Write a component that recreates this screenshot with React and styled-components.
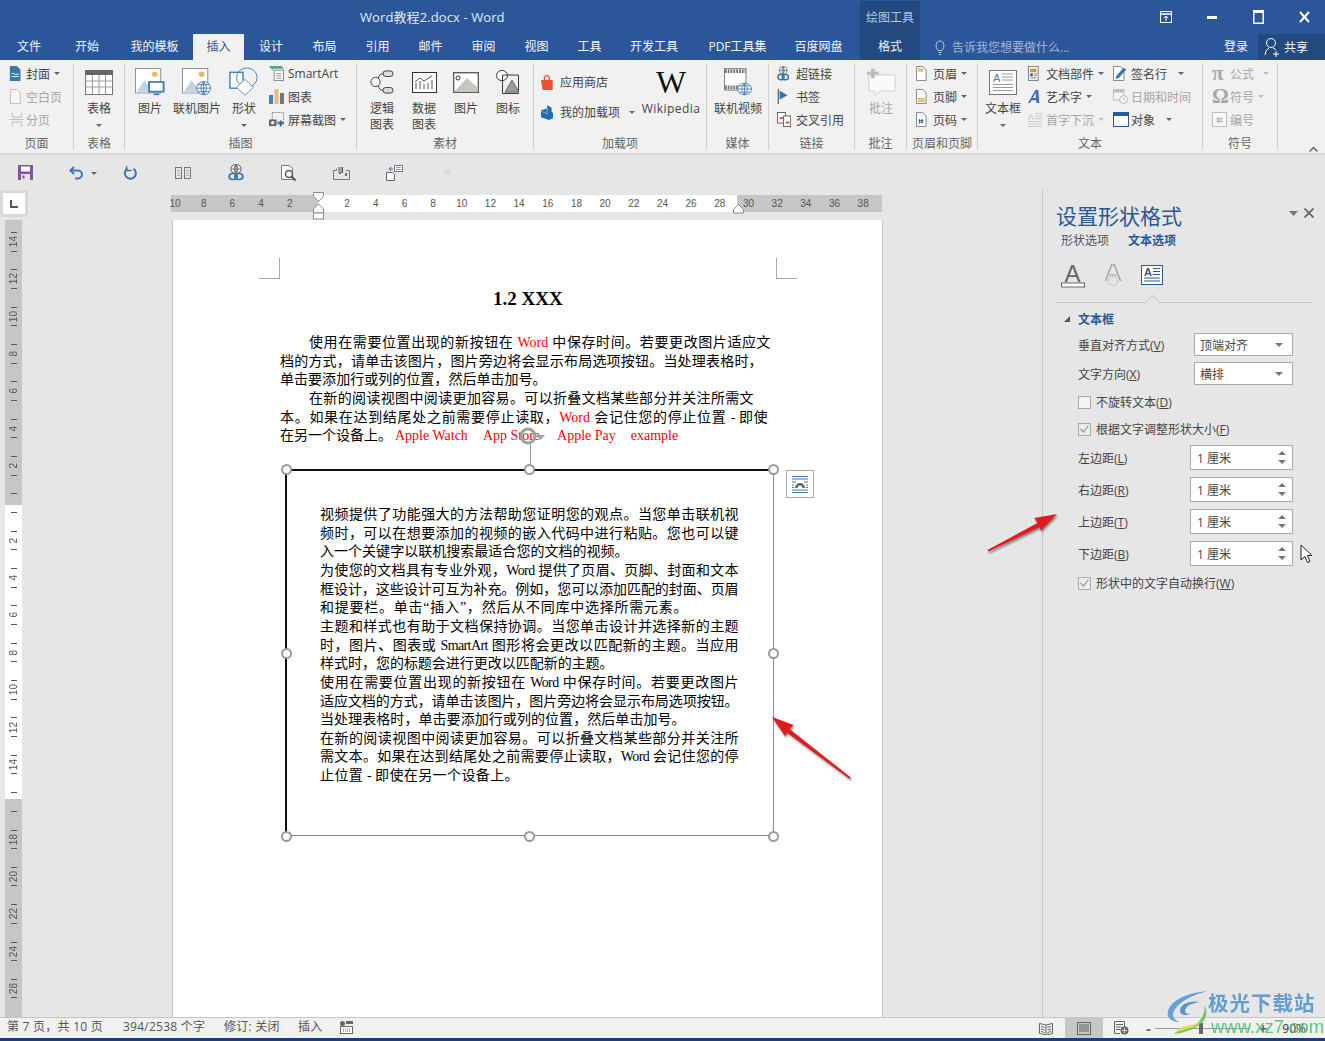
import React from "react";
import styled, { createGlobalStyle } from "styled-components";

const UI = `"Open Sans", "Noto Sans CJK SC", sans-serif`;
const BLUE = "#2b579a";

const Global = createGlobalStyle`
  html, body { margin: 0; padding: 0; background: #e6e6e6; }
  * { box-sizing: border-box; }
`;

const Window = styled.div`
  position: relative;
  width: 1325px;
  height: 1041px;
  overflow: hidden;
  display: flex;
  flex-direction: column;
  background: #e6e6e6;
  font-family: ${UI};
  font-size: 12px;
  color: #444;
`;

/* title bar + tabs */
const TitleBar = styled.div`
  height: 34px;
  flex: none;
  display: flex;
  background: ${BLUE};
  color: #e4ebf5;
`;
const TitleText = styled.div`
  width: 500px;
  margin-left: 360px;
  line-height: 34px;
  font-size: 13px;
  letter-spacing: 0.1px;
`;
const ContextHead = styled.div`
  width: 60px;
  margin-top: 1px;
  background: #234a80;
  color: #b5c6de;
  text-align: center;
  line-height: 33px;
`;
const WinBtns = styled.div`
  display: flex;
  margin-left: auto;
  margin-right: -2px;
`;
const WinBtn = styled.div`
  width: 46px;
  display: flex;
  align-items: center;
  justify-content: center;
`;
const TabBar = styled.div`
  height: 26px;
  flex: none;
  display: flex;
  background: ${BLUE};
  color: #f2f5fa;
`;
const Tab = styled.div`
  width: ${(p) => p.$w}px;
  flex: none;
  text-align: center;
  line-height: 26px;
  white-space: nowrap;
  background: ${(p) => (p.$active ? "#f1f1f1" : p.$ctx ? "#234a80" : "transparent")};
  color: ${(p) => (p.$active ? BLUE : "inherit")};
  margin-left: ${(p) => p.$ml || 0}px;
`;
const TellMe = styled.div`
  margin-left: 15px;
  width: 280px;
  flex: none;
  display: flex;
  align-items: center;
  gap: 7px;
  color: #a4b8d4;
`;
const Login = styled.div`
  width: 38px;
  flex: none;
  margin-left: 2px;
  line-height: 26px;
  text-align: center;
`;
const Share = styled.div`
  width: 67px;
  flex: none;
  margin-left: 3px;
  background: #234a80;
  display: flex;
  align-items: center;
  gap: 3px;
  padding-left: 6px;
`;

/* ribbon */
const Ribbon = styled.div`
  height: 95px;
  flex: none;
  display: flex;
  padding-top: 3px;
  background: #f1f1f1;
  border-bottom: 2px solid #d6d6d6;
`;
const Group = styled.div`
  width: ${(p) => p.$w}px;
  height: 87px;
  flex: none;
  display: flex;
  flex-direction: column;
  border-right: 1px solid #cfcfcf;
`;
const GroupBody = styled.div`
  flex: 1;
  display: flex;
  padding-left: ${(p) => p.$pl || 0}px;
`;
const GroupLabel = styled.div`
  height: 13px;
  line-height: 13px;
  text-align: center;
  color: #666;
  white-space: nowrap;
`;
const LargeBtn = styled.div`
  width: ${(p) => p.$w}px;
  flex: none;
  display: flex;
  flex-direction: column;
  align-items: center;
  color: ${(p) => (p.$off ? "#a6a6a6" : "inherit")};
`;
const LargeIcon = styled.div`
  height: 38px;
  display: flex;
  align-items: center;
  justify-content: center;
  font-family: "Liberation Serif", serif;
  font-size: 32px;
  color: #111;
`;
const LargeText = styled.div`
  line-height: 16px;
  text-align: center;
  white-space: nowrap;
`;
const WikiText = styled.span`
  letter-spacing: 0.45px;
`;
const Caret = styled.span`
  display: inline-block;
  width: 0;
  height: 0;
  border-left: 3px solid transparent;
  border-right: 3px solid transparent;
  border-top: 3px solid ${(p) => (p.$off ? "#bbb" : "#666")};
  margin-left: ${(p) => p.$ml ?? 4}px;
  margin-top: ${(p) => p.$mt || 0}px;
  vertical-align: middle;
`;
const SmallCol = styled.div`
  width: ${(p) => (p.$w ? `${p.$w}px` : "auto")};
  flex: none;
  display: flex;
  flex-direction: column;
  margin-top: -1px;
`;
const SmallRow = styled.div`
  height: ${(p) => p.$h || 23}px;
  display: flex;
  align-items: center;
  white-space: nowrap;
  color: ${(p) => (p.$off ? "#a6a6a6" : "inherit")};
`;
const Slot = styled.span`
  width: ${(p) => p.$w || 17}px;
  flex: none;
  display: flex;
  align-items: center;
  svg {
    height: 15px;
    width: auto;
  }
`;
const Glyph = styled.span`
  font-family: "Liberation Serif", serif;
  font-size: 21px;
  font-weight: 700;
  line-height: 1;
  color: #a6a6a6;
`;
const Collapse = styled.div`
  margin-left: auto;
  margin-right: 7px;
  align-self: flex-end;
  margin-bottom: 1px;
  line-height: 0;
`;

/* quick access */
const Qat = styled.div`
  height: 35px;
  flex: none;
  display: flex;
  align-items: center;
  background: #e6e6e6;
`;
const QBtn = styled.div`
  width: ${(p) => p.$w || 53}px;
  display: flex;
  align-items: center;
  justify-content: center;
  position: relative;
`;
const QCaret = styled(Caret)`
  position: absolute;
  left: 41px;
  top: 6px;
`;

/* workspace */
const Workspace = styled.div`
  flex: 1;
  min-height: 0;
  display: flex;
`;
const Gutter = styled.div`
  width: 171px;
  flex: none;
  display: flex;
  flex-direction: column;
`;
const Corner = styled.div`
  width: 28px;
  height: 27px;
  flex: none;
  margin-bottom: 3px;
  background: #d9d9d9;
  padding: 3px;
`;
const CornerFace = styled.div`
  width: 22px;
  height: 21px;
  background: #fff;
  display: flex;
  align-items: center;
  justify-content: center;
`;
const VRuler = styled.div`
  width: 17px;
  flex: 1;
  margin-left: 5px;
  padding-top: 3px;
  background: linear-gradient(#c6c6c6 285px, #fff 285px, #fff 579px, #c6c6c6 579px);
  overflow: hidden;
`;
const VCell = styled.div`
  position: relative;
  height: 37.35px;
  display: flex;
  align-items: center;
  justify-content: center;
  font-size: 10px;
  font-family: "Liberation Sans", sans-serif;
  color: #555;
  &::before,
  &::after {
    content: "";
    position: absolute;
    left: 6px;
    width: 6px;
    height: 1px;
    background: #555;
  }
  &::before { top: 9px; }
  &::after { top: 27.5px; }
`;
const VNum = styled.span`
  writing-mode: vertical-rl;
  transform: rotate(180deg);
  line-height: 1;
`;
const DocCol = styled.div`
  width: 712px;
  flex: none;
  display: flex;
  flex-direction: column;
`;
const HRuler = styled.div`
  position: relative;
  height: 17px;
  flex: none;
  margin: 5px 0 8px;
  width: 711px;
  background: linear-gradient(90deg, #c6c6c6 147px, #fff 147px, #fff 566px, #c6c6c6 566px);
`;
const HScale = styled.div`
  display: flex;
  margin-left: -10.3px;
  width: 721px;
  overflow: hidden;
`;
const HCell = styled.div`
  width: 28.68px;
  flex: none;
  text-align: center;
  font-size: 10px;
  line-height: 17px;
  font-family: "Liberation Sans", sans-serif;
  color: #555;
`;
const RulerMark = styled.svg`
  position: absolute;
  left: ${(p) => p.$x}px;
  top: ${(p) => p.$y}px;
`;
const Page = styled.div`
  flex: 1;
  margin-left: 1px;
  background: #fff;
  border-left: 1px solid #c6c6c6;
  border-right: 1px solid #c6c6c6;
  padding-top: 38px;
  color: #000;
  font-family: "Liberation Serif", "Noto Sans CJK SC", serif;
  font-size: 14px;
`;
const CropRow = styled.div`
  display: flex;
  justify-content: space-between;
  padding: 0 85px 0 86px;
`;
const Crop = styled.div`
  width: 21px;
  height: 21px;
  border-bottom: 1px solid #aaa;
  border-${(p) => p.$side}: 1px solid #aaa;
`;
const Heading = styled.div`
  margin-top: 11px;
  height: 18px;
  padding-left: 320px;
  font-size: 19px;
  font-weight: 700;
  line-height: 18px;
`;
const Para = styled.div`
  margin-top: 26px;
  padding-left: 107px;
`;
const Line = styled.div`
  height: 18.67px;
  line-height: 18.67px;
  width: ${(p) => p.$w}px;
  margin-left: ${(p) => p.$x || 0}px;
  letter-spacing: -0.6px;
  text-align: justify;
  text-align-last: justify;
`;
const FreeLine = styled.div`
  height: 18.67px;
  line-height: 18.67px;
  white-space: nowrap;
`;
const Red = styled.span`
  color: #f00;
  letter-spacing: 0;
  margin-left: ${(p) => p.$ml || 0}px;
`;
const ShapeBox = styled.div`
  position: relative;
  margin: 23px 0 0 112px;
  width: 488.5px;
  height: 367.5px;
  padding: 35px 0 0 33px;
  border-top: 2px solid #111;
  border-left: 2px solid #111;
  border-right: 1.5px solid #8e8e8e;
  border-bottom: 1.5px solid #8e8e8e;
`;
const Handle = styled.span`
  position: absolute;
  left: calc(${(p) => p.$h}% + ${(p) => (p.$h / 100) * 2 - 1}px);
  top: calc(${(p) => p.$v}% + ${(p) => (p.$v / 100) * 2 - 1}px);
  width: 11px;
  height: 11px;
  margin: -5.5px 0 0 -5.5px;
  border-radius: 50%;
  background: #fff;
  border: 2px solid #9a9a9a;
`;
const RotStem = styled.span`
  position: absolute;
  left: 243px;
  top: -28px;
  width: 1px;
  height: 27px;
  background: #9a9a9a;
`;
const RotHandle = styled.svg`
  position: absolute;
  left: 229px;
  top: -49px;
`;
const LayoutBtn = styled.div`
  position: absolute;
  left: 499px;
  top: -1px;
  width: 28px;
  height: 28px;
  background: #fff;
  border: 1px solid #aaa;
  display: flex;
  align-items: center;
  justify-content: center;
`;

/* format pane */
const Pane = styled.div`
  position: relative;
  width: 283px;
  flex: none;
  margin-left: auto;
  border-left: 1px solid #c6c6c6;
  padding-top: 12px;
`;
const PaneHead = styled.div`
  display: flex;
  justify-content: space-between;
  align-items: center;
  padding: 0 11px 0 13px;
`;
const PaneTitle = styled.div`
  font-size: 21px;
  line-height: 28px;
  color: ${BLUE};
`;
const PaneTools = styled.div`
  display: flex;
  align-items: center;
  gap: 6px;
  margin-top: -6px;
`;
const SubTabs = styled.div`
  display: flex;
  height: 16px;
  line-height: 16px;
  margin: 3px 0 0 18px;
`;
const SubTab = styled.div`
  width: ${(p) => p.$w}px;
  color: ${(p) => (p.$on ? BLUE : "#555")};
  font-weight: ${(p) => (p.$on ? 700 : 400)};
`;
const PaneIcons = styled.div`
  display: flex;
  align-items: center;
  height: 24px;
  margin: 14px 0 0 18px;
  gap: 19px;
`;
const PaneRule = styled.div`
  position: relative;
  height: 1px;
  width: 257px;
  margin: 15px 0 0 13px;
  background: #c9c9c9;
  &::after {
    content: "";
    position: absolute;
    left: 91px;
    top: -5px;
    width: 10px;
    height: 10px;
    background: #e6e6e6;
    border-left: 1px solid #c9c9c9;
    border-top: 1px solid #c9c9c9;
    transform: rotate(45deg);
  }
`;
const SectionHead = styled.div`
  display: flex;
  align-items: center;
  height: 16px;
  margin: 8px 0 0 21px;
  gap: 8px;
  color: ${BLUE};
  font-weight: 700;
`;
const FieldRow = styled.div`
  display: flex;
  align-items: center;
  justify-content: space-between;
  width: 215px;
  margin: ${(p) => p.$mt}px 0 0 35px;
  height: ${(p) => p.$h}px;
  white-space: nowrap;
`;
const Select = styled.div`
  width: 99px;
  height: 23px;
  background: #fff;
  border: 1px solid #ababab;
  padding: 0 9px 0 5px;
  display: flex;
  align-items: center;
  justify-content: space-between;
`;
const Spin = styled.div`
  width: 103px;
  height: 25px;
  background: #fff;
  border: 1px solid #ababab;
  padding: 0 6px;
  display: flex;
  align-items: center;
  justify-content: space-between;
`;
const SpinArrows = styled.div`
  display: flex;
  flex-direction: column;
  gap: 5px;
`;
const Arrow = styled.span`
  width: 0;
  height: 0;
  border-left: 4px solid transparent;
  border-right: 4px solid transparent;
  ${(p) => (p.$up ? "border-bottom" : "border-top")}: 4px solid #777;
`;
const CheckRow = styled.div`
  display: flex;
  align-items: center;
  gap: 5px;
  height: 18px;
  margin: ${(p) => p.$mt}px 0 0 35px;
  white-space: nowrap;
`;
const Check = styled.span`
  width: 13px;
  height: 13px;
  flex: none;
  border: 1px solid #ababab;
  background: ${(p) => (p.$on ? "#ececec" : "#f4f4f4")};
  display: flex;
  align-items: center;
  justify-content: center;
`;
const Under = styled.span`
  text-decoration: underline;
`;
const Cursor = styled.svg`
  position: absolute;
  left: 257px;
  top: 354px;
`;

/* status */
const Status = styled.div`
  height: 21px;
  flex: none;
  display: flex;
  align-items: center;
  padding-left: 7px;
  background: #f1f1f1;
  border-top: 1px solid #c6c6c6;
  color: #555;
`;
const StatusItem = styled.div`
  width: ${(p) => p.$w}px;
  flex: none;
  height: 20px;
  white-space: nowrap;
  line-height: 18px;
  letter-spacing: 0.25px;
`;
const MacroSlot = styled.div`
  margin-top: -2px;
  line-height: 0;
`;
const StatusRight = styled.div`
  margin-left: auto;
  display: flex;
  align-items: center;
  height: 100%;
  padding-right: 19px;
`;
const ViewBtn = styled.div`
  width: 38px;
  height: 100%;
  display: flex;
  align-items: center;
  justify-content: center;
  background: ${(p) => (p.$on ? "#c6c6c6" : "transparent")};
`;
const ZoomTrack = styled.div`
  position: relative;
  width: 95px;
  height: 1px;
  margin: 0 9px 0 4px;
  background: #999;
  &::after {
    content: "";
    position: absolute;
    left: 44px;
    top: -5px;
    width: 4px;
    height: 11px;
    background: #666;
  }
`;
const ZoomSign = styled.span`
  font-size: 15px;
  font-weight: 700;
  line-height: 1;
  color: #666;
  margin-left: ${(p) => p.$ml || 0}px;
`;
const ZoomValue = styled.span`
  margin-left: 15px;
  color: #333;
`;
const BottomEdge = styled.div`
  height: 3px;
  flex: none;
  background: #1e3f6f;
`;

/* things lying over the page */
const Annotations = styled.svg`
  position: absolute;
  left: 0;
  top: 0;
  pointer-events: none;
  filter: drop-shadow(1px 2px 1px rgba(0, 0, 0, 0.45));
`;
const Watermark = styled.div`
  position: absolute;
  left: 1166px;
  top: 989px;
  display: flex;
  opacity: 0.92;
`;
const MarkText = styled.div`
  margin-left: -2px;
  padding-top: 1px;
`;
const MarkName = styled.div`
  font-size: 20.5px;
  font-weight: 700;
  line-height: 26px;
  letter-spacing: 1px;
  color: #5a97d0;
  white-space: nowrap;
`;
const MarkUrl = styled.div`
  font-size: 18.5px;
  line-height: 22px;
  color: #52c278;
  font-family: "Liberation Sans", sans-serif;
  white-space: nowrap;
  margin-left: 3px;
`;

/* icons */
const S = ({ w, h, vw, vh, children }) => (
  <svg width={w} height={h} viewBox={`0 0 ${vw || w} ${vh || h}`} preserveAspectRatio="none" fill="none">{children}</svg>
);

const CoverIcon = () => (
  <S w={14} h={17}>
    <path d="M1 0h8l4 4v13H1z" fill="#3b76b3" />
    <path d="M3 9q1.5-1.5 3 0t5 0" stroke="#fff" />
    <path d="M3 12h8" stroke="#fff" />
  </S>
);
const BlankIcon = () => (
  <S w={13} h={16}>
    <path d="M1.5.5h7l3.500 3.500V15.500H1.500z" stroke="#bdbdbd" fill="#f8f8f8" />
  </S>
);
const BreakIcon = () => (
  <S w={16} h={16}>
    <path d="M3.500.5v5h10v-5M3.500 15.500v-5h10v5M0 8h16" stroke="#bdbdbd" />
  </S>
);
const TableIcon = () => (
  <S w={28} h={25}>
    <rect x=".5" y=".5" width="27" height="24" fill="#fff" stroke="#777" />
    <rect width="28" height="5" fill="#666" />
    <path d="M.5 11h27M.5 17h27M7.500 5v19M14 5v19M20.500 5v19" stroke="#999" />
  </S>
);
const PictureIcon = ({ online }) => (
  <S w={30} h={28} vw={32} vh={32}>
    <rect x=".5" y=".5" width="27" height="28" fill="#fff" stroke="#8a8a8a" />
    <circle cx="21" cy="7" r="3" fill="#eeb75f" />
    <path d="M2 27l8-13 7 9 2 4z" fill="#c2d3e6" />
    {online ? (
      <g stroke="#3f7db8">
        <circle cx="23" cy="23" r="7.500" fill="#fff" />
        <path d="M15.500 23h15M23 15.500v15M17 19h12M17 27h12M23 15.500q-6 7.500 0 15M23 15.500q6 7.500 0 15" />
      </g>
    ) : (
      <g>
        <rect x="15" y="16" width="15.500" height="11" fill="#fff" stroke="#3f7db8" strokeWidth="2" />
        <path d="M20 30h6" stroke="#3f7db8" strokeWidth="2" />
      </g>
    )}
  </S>
);
const ShapeIcon = () => (
  <S w={30} h={30} vw={32} vh={34}>
    <rect x="1" y="6" width="14" height="18" stroke="#3f7db8" strokeWidth="1.500" fill="#fff" />
    <circle cx="19" cy="12" r="11" stroke="#3f7db8" fill="none" />
    <path d="M17 14l9 9-9 9-9-9z" fill="#fff" stroke="#5a8fc0" />
  </S>
);
const SmartArtIcon = () => (
  <S w={16} h={16}>
    <path d="M0 0h13l3 3H4v2z" fill="#55a28a" />
    <rect x="5.500" y="4.500" width="10" height="11" fill="#fff" stroke="#888" />
    <path d="M8 8h5M8 10.500h5M8 13h5" stroke="#888" />
  </S>
);
const ChartIcon = () => (
  <S w={15} h={15}>
    <rect x="0" y="6" width="4" height="9" fill="#4a7ebb" />
    <rect x="5.500" y="0" width="4" height="15" fill="#e8bd7c" />
    <rect x="11" y="4" width="4" height="11" fill="#777" />
  </S>
);
const ScreenshotIcon = () => (
  <S w={17} h={16}>
    <rect x="3.500" y=".5" width="12" height="10" stroke="#888" strokeDasharray="2 1" />
    <rect x="0" y="8" width="8" height="7" fill="#666" />
    <circle cx="4" cy="11.500" r="1.800" fill="#fff" />
    <path d="M9 12h7M12.500 9v6.500" stroke="#2b6cb0" strokeWidth="2" />
  </S>
);
const LogicIcon = () => (
  <S w={24} h={24} vw={26} vh={26}>
    <circle cx="6" cy="13" r="5" fill="#fff" stroke="#333" />
    <rect x="14" y="1" width="11" height="6" rx="3" fill="#ddd" stroke="#333" />
    <rect x="14" y="19" width="11" height="6" rx="3" fill="#ddd" stroke="#333" />
    <path d="M9 9q1-5 5-5M9 17q1 5 5 5" stroke="#333" />
  </S>
);
const DataIcon = () => (
  <S w={25} h={21}>
    <rect x=".5" y=".5" width="24" height="20" fill="#fff" stroke="#333" />
    <path d="M4 17v-6M8 17v-8M12 17v-5M16 17v-6M20 17v-9" stroke="#555" />
    <path d="M3 10l5-4 4 3 8-5" stroke="#555" />
  </S>
);
const ImageIcon = () => (
  <S w={26} h={21}>
    <rect x=".5" y=".5" width="25" height="20" fill="#fff" stroke="#333" />
    <rect x="1" y="1" width="24" height="19" fill="#fff" stroke="#888" />
    <circle cx="5" cy="6" r="2" stroke="#333" />
    <path d="M2 19l12-13 10 9v4z" fill="#c9c5bf" />
  </S>
);
const MarkIcon = () => (
  <S w={24} h={24} vw={24} vh={26}>
    <circle cx="6" cy="6" r="5.500" fill="#fff" stroke="#333" />
    <path d="M6.500 5.500h16v20h-16z" stroke="#333" fill="none" />
    <path d="M9 24l7-13 7 13z" fill="#9c9c9c" stroke="#666" />
  </S>
);
const StoreIcon = () => (
  <S w={14} h={18}>
    <path d="M0 6h14v12H2z" fill="#e8532a" />
    <path d="M4 6V3q3-5 6 0v3" stroke="#e8532a" strokeWidth="1.500" />
  </S>
);
const AddinIcon = () => (
  <S w={14} h={17}>
    <path d="M7 0l5 3v5l2 1v6l-5 2-9-3V6l7-2z" fill="#1f6fb5" />
    <path d="M7 4v6l-7-3" stroke="#8dbbe0" />
  </S>
);
const VideoIcon = () => (
  <S w={28} h={28} vw={30} vh={36}>
    <rect x=".5" y=".5" width="23" height="28" fill="#fff" stroke="#777" />
    <path d="M1 4h22M1 25h22" stroke="#777" strokeWidth="5" strokeDasharray="2 1" />
    <g stroke="#3f7db8">
      <circle cx="22" cy="27" r="7.500" fill="#fff" />
      <path d="M14.500 27h15M22 19.500v15M16 23h12M16 31h12M22 19.500q-6 7.500 0 15M22 19.500q6 7.500 0 15" />
    </g>
  </S>
);
const LinkIcon = ({ w = 14, h = 17 }) => (
  <S w={w} h={h} vw={14} vh={17}>
    <circle cx="7" cy="5" r="4.500" stroke="#777" fill="#fff" />
    <path d="M2.500 5h9M7 .5v9M7 .5q-3 4.500 0 9M7 .5q3 4.500 0 9" stroke="#777" />
    <rect x="1" y="9.500" width="7" height="6" rx="3" stroke="#2e75b6" strokeWidth="1.700" fill="none" />
    <rect x="6" y="9.500" width="7" height="6" rx="3" stroke="#2e75b6" strokeWidth="1.700" fill="none" />
  </S>
);
const BookmarkIcon = () => (
  <S w={14} h={17}>
    <path d="M1.500 0v17" stroke="#666" strokeWidth="1.500" />
    <path d="M3 2l9 5-9 5z" fill="#2e75b6" />
  </S>
);
const CrossIcon = () => (
  <S w={16} h={17}>
    <rect x=".5" y=".5" width="9" height="12" fill="#fff" stroke="#555" />
    <rect x="7.500" y="4.500" width="8" height="12" fill="#fff" stroke="#555" />
    <rect x="3" y="6" width="4" height="2" fill="#d9452c" />
    <rect x="10" y="11" width="4" height="2" fill="#d9452c" />
  </S>
);
const CommentIcon = () => (
  <S w={29} h={29} vw={30} vh={38}>
    <path d="M3 9h25a1 1 0 0 1 1 1v19a1 1 0 0 1-1 1H14l-6 6v-6H3a1 1 0 0 1-1-1V10a1 1 0 0 1 1-1z" fill="#fafafa" stroke="#c9c9c9" />
    <path d="M6 1v12M0 7h12" stroke="#bdbdbd" strokeWidth="4" />
  </S>
);
const HeadFootIcon = ({ part }) => (
  <S w={12} h={17}>
    <path d="M.5.5h7l4 4v12H.5z" fill="#fff" stroke="#777" />
    {part === "head" && <rect x="2" y="2.500" width="6" height="4" fill="#e8c27d" />}
    {part === "foot" && <rect x="2" y="10" width="8" height="5" fill="#e8c27d" />}
    {part === "num" && <path d="M4 8v5M7 8v5M3 9.500h5.500M3 11.500h5.500" stroke="#2b579a" />}
  </S>
);
const TextBoxIcon = () => (
  <S w={28} h={25}>
    <rect x=".5" y=".5" width="27" height="24" fill="#fff" stroke="#777" />
    <text x="4" y="12" fontSize="11" fill="#3f7db8" fontFamily="Liberation Sans">A</text>
    <path d="M13 4h11M13 7h11M13 10h11M4 14.500h20M4 17.500h20M4 20.500h20" stroke="#999" />
  </S>
);
const PartsIcon = () => (
  <S w={13} h={17}>
    <rect x=".5" y=".5" width="11" height="16" fill="#f6f6f6" stroke="#777" />
    <rect x="2.500" y="3" width="7" height="4" fill="#d9913c" />
    <rect x="2.500" y="8.500" width="3" height="3" fill="#2b579a" />
    <path d="M7 9h3M7 11h3M2.500 13.500h7" stroke="#777" />
  </S>
);
const WordArtIcon = () => (
  <S w={13} h={16}>
    <path d="M0 15L8 1h3l1 14h-3l-.3-3H4l-1.700 3zM5.300 9.500H8.500L8 4z" fill="#3f72b5" fillRule="evenodd" />
  </S>
);
const DropCapIcon = () => (
  <S w={17} h={18}>
    <text x="0" y="9" fontSize="10" fill="#bcbcbc" fontFamily="Liberation Sans">A</text>
    <path d="M8 2h9M8 5h9M8 8h9M0 11.500h17M0 14.500h17M0 17.500h17" stroke="#c4c4c4" />
  </S>
);
const SignIcon = () => (
  <S w={16} h={17}>
    <path d="M.5.5h8l4 4v12H.5z" fill="#fff" stroke="#777" />
    <path d="M3 15l1-4 8-9 3 2-8 9z" fill="#2e75b6" />
  </S>
);
const DateIcon = () => (
  <S w={17} h={17}>
    <rect x=".5" y=".5" width="12" height="12" fill="#f4f4f4" stroke="#bdbdbd" />
    <rect x="1" y="1" width="11" height="3" fill="#bdbdbd" />
    <circle cx="12" cy="12" r="4.500" fill="#f4f4f4" stroke="#b2b2b2" />
    <path d="M12 9.500V12h2" stroke="#b2b2b2" />
  </S>
);
const ObjectIcon = () => (
  <S w={16} h={15}>
    <rect x=".5" y=".5" width="15" height="14" fill="#fff" stroke="#2b579a" />
    <rect width="16" height="4" fill="#2b579a" />
  </S>
);
const NumberIcon = () => (
  <S w={15} h={15}>
    <rect x=".5" y=".5" width="14" height="14" fill="#f8f8f8" stroke="#bdbdbd" />
    <path d="M6 5v6M9 5v6M4.500 6.800h6M4.500 9.300h6" stroke="#b0b0b0" />
  </S>
);
const SaveIcon = () => (
  <S w={15} h={15}>
    <path d="M0 0h15v15H0z" fill="#84529f" />
    <rect x="3" y="1.500" width="9" height="5" fill="#fff" />
    <rect x="3" y="9" width="9" height="6" fill="#e9e0ef" />
    <rect x="4.500" y="10.500" width="2" height="3" fill="#84529f" />
  </S>
);
const UndoIcon = () => (
  <S w={15} h={14}>
    <path d="M5 1L1.500 4.500 5 8" stroke="#3e76b5" strokeWidth="2" />
    <path d="M2 4.500h7a4 4 0 0 1 4 4v0a4 4 0 0 1-4 4H6" stroke="#3e76b5" strokeWidth="2" />
  </S>
);
const RedoIcon = () => (
  <S w={14} h={14}>
    <path d="M4.500 2.500a5.500 5.500 0 1 0 6 .2" stroke="#3e76b5" strokeWidth="2" />
    <path d="M3.500 0v4.500h5" stroke="#3e76b5" strokeWidth="1.500" />
  </S>
);
const BooksIcon = () => (
  <S w={16} h={12}>
    <rect x=".5" y=".5" width="6" height="11" stroke="#777" />
    <rect x="9.500" y=".5" width="6" height="11" stroke="#777" />
    <path d="M2 3.500h3M2 6h3M2 8.500h3M11 3.500h3M11 6h3M11 8.500h3" stroke="#aaa" />
  </S>
);
const DocSearchIcon = () => (
  <S w={15} h={16}>
    <path d="M.5.5h8l3 3v11H.5z" fill="#fff" stroke="#777" />
    <circle cx="8" cy="9" r="3.500" stroke="#555" strokeWidth="1.500" fill="#fff" />
    <path d="M10.500 11.500L14.500 15.500" stroke="#555" strokeWidth="2" />
  </S>
);
const ClipIcon = () => (
  <S w={17} h={15}>
    <path d="M.5 5.500h3v-2M13 5.500h3.500v9H.5v-9" stroke="#777" />
    <path d="M6 2v6q1 2 2 0V2M9.500 2v6" stroke="#555" />
    <rect x="12" y="8" width="2" height="3" fill="#3e76b5" />
  </S>
);
const ReplyIcon = () => (
  <S w={17} h={16}>
    <rect x="8.500" y=".5" width="8" height="6" fill="#fff" stroke="#777" />
    <path d="M10 2.500h5M10 4.500h5" stroke="#999" />
    <path d="M.5 7.500h6l2 2v6h-8z" fill="#fff" stroke="#666" />
    <path d="M7 4H3M5 2L3 4l2 2" stroke="#3e76b5" />
  </S>
);
const AIcon = () => (
  <S w={24} h={28}>
    <text x="3.500" y="21" fontSize="24" fill="#666" fontFamily="Liberation Sans">A</text>
    <rect x=".5" y="22" width="23" height="4" fill="#fff" stroke="#666" />
  </S>
);
const AOutlineIcon = () => (
  <S w={18} h={22}>
    <path d="M1.500 17L7.500 1h3l6 16" stroke="#a5a5a5" strokeWidth="1.500" />
    <path d="M5 11h8" stroke="#a5a5a5" />
    <circle cx="9" cy="17" r="4.500" stroke="#c4c4c4" />
  </S>
);
const ABoxIcon = () => (
  <S w={22} h={20}>
    <rect x=".5" y=".5" width="21" height="19" fill="#fff" stroke="#2b579a" />
    <text x="3" y="11" fontSize="11" fill="#2b579a" fontFamily="Liberation Sans" fontWeight="700">A</text>
    <path d="M12 3.500h7M12 6.500h7M12 9.500h7M3 13h16M3 16h16" stroke="#2b579a" />
  </S>
);
const LayoutIcon = () => (
  <S w={20} h={20}>
    <path d="M2 2.500h16M2 5h16M2 16h16M2 18.500h16M2 8h4M14 8h4M2 11h2M16 11h2M2 13.500h2M16 13.500h2" stroke="#3f7db8" />
    <path d="M5 14a5 5 0 0 1 10 0h-2.500a2.500 2.500 0 0 0-5 0z" fill="#666" />
  </S>
);
const RibbonRestore = () => (
  <S w={12} h={12}>
    <rect x=".5" y=".5" width="11" height="11" stroke="#fff" />
    <path d="M0 3h12" stroke="#fff" strokeWidth="1.500" />
    <path d="M6 10V5M4 7l2-2 2 2" stroke="#fff" />
  </S>
);

const VIEW_LINE = "#666";
const ReadIcon = () => (
  <S w={14} h={13}>
    <path d="M.5 1.500L7 3l6.500-1.500v10L7 13 .5 11.500zM7 3v10" stroke={VIEW_LINE} />
    <path d="M2 4.500l3.500 1M2 7l3.500 1M2 9.500l3.500 1M12 4.500l-3.500 1M12 7l-3.500 1M12 9.500l-3.500 1" stroke={VIEW_LINE} />
  </S>
);
const PrintIcon = () => (
  <S w={14} h={13}>
    <rect x=".5" y=".5" width="13" height="12" stroke={VIEW_LINE} />
    <path d="M2 3h10M2 5h10M2 7h10M2 9h10" stroke={VIEW_LINE} />
  </S>
);
const WebIcon = () => (
  <S w={15} h={14}>
    <path d="M.5.5h10v6M6 12.500H.5V.5M2 3.500h7M2 6h5M2 8.500h4" stroke={VIEW_LINE} />
    <circle cx="10.500" cy="9.500" r="4" fill="#666" />
    <path d="M8 9.500h5M10.500 7v5" stroke="#eee" />
  </S>
);
const MacroIcon = () => (
  <S w={13} h={13}>
    <circle cx="2.500" cy="2.500" r="2.500" fill="#666" />
    <rect x=".5" y="5.500" width="12" height="7" fill="#fff" stroke="#666" />
    <rect x="6" y="0" width="7" height="3" fill="#666" />
    <path d="M3 8h7M3 10h7" stroke="#666" strokeDasharray="1 1" />
  </S>
);
const SmallCheck = () => (
  <S w={9} h={8}>
    <path d="M.5 4l3 3 5-6.500" stroke="#999" strokeWidth="1.200" />
  </S>
);

const HNUMS = [10, 8, 6, 4, 2, "", 2, 4, 6, 8, 10, 12, 14, 16, 18, 20, 22, 24, 26, 28, 30, 32, 34, 36, 38];
const VNUMS = [14, 12, 10, 8, 6, 4, 2, "", 2, 4, 6, 8, 10, 12, 14, "", 18, 20, 22, 24, 28];

const HANDLES = [
  [0, 0], [50, 0], [100, 0],
  [0, 50], [100, 50],
  [0, 100], [50, 100], [100, 100],
];

const BOX_LINES = [
  [418, "视频提供了功能强大的方法帮助您证明您的观点。当您单击联机视"],
  [418, "频时，可以在想要添加的视频的嵌入代码中进行粘贴。您也可以键"],
  [308, "入一个关键字以联机搜索最适合您的文档的视频。"],
  [418, "为使您的文档具有专业外观，Word 提供了页眉、页脚、封面和文本"],
  [418, "框设计，这些设计可互为补充。例如，您可以添加匹配的封面、页眉"],
  [367, "和提要栏。单击“插入”，然后从不同库中选择所需元素。"],
  [418, "主题和样式也有助于文档保持协调。当您单击设计并选择新的主题"],
  [418, "时，图片、图表或 SmartArt 图形将会更改以匹配新的主题。当应用"],
  [293, "样式时，您的标题会进行更改以匹配新的主题。"],
  [418, "使用在需要位置出现的新按钮在 Word 中保存时间。若要更改图片"],
  [418, "适应文档的方式，请单击该图片，图片旁边将会显示布局选项按钮。"],
  [365, "当处理表格时，单击要添加行或列的位置，然后单击加号。"],
  [418, "在新的阅读视图中阅读更加容易。可以折叠文档某些部分并关注所"],
  [418, "需文本。如果在达到结尾处之前需要停止读取，Word 会记住您的停"],
  [198, "止位置 - 即使在另一个设备上。"],
];

const TABS = [
  ["文件", 58], ["开始", 58], ["我的模板", 77], ["插入", 51, true], ["设计", 54], ["布局", 53],
  ["引用", 53], ["邮件", 53], ["审阅", 53], ["视图", 53], ["工具", 53], ["开发工具", 76],
  ["PDF工具集", 91], ["百度网盘", 71],
];

const Small = ({ icon, w, off, caret, ml, h, children }) => (
  <SmallRow $off={off} $h={h}>
    <Slot $w={w}>{icon}</Slot>
    {children}
    {caret && <Caret $off={off} $ml={ml} />}
  </SmallRow>
);

const Large = ({ w, icon, off, caret, children }) => (
  <LargeBtn $w={w} $off={off}>
    <LargeIcon>{icon}</LargeIcon>
    <LargeText>{children}</LargeText>
    {caret && <Caret $ml={0} $mt={7} />}
  </LargeBtn>
);

export default function App() {
  return (
    <Window>
      <Global />
      <TitleBar>
        <TitleText>Word教程2.docx - Word</TitleText>
        <ContextHead>绘图工具</ContextHead>
        <WinBtns>
          <WinBtn><RibbonRestore /></WinBtn>
          <WinBtn><S w={10} h={3}><rect width="10" height="3" fill="#fff" /></S></WinBtn>
          <WinBtn><S w={11} h={14}><rect x=".75" y=".75" width="9.500" height="12.500" stroke="#fff" strokeWidth="1.500" /><rect width="11" height="3" fill="#fff" /></S></WinBtn>
          <WinBtn><S w={11} h={12}><path d="M1 1l9 10M10 1L1 11" stroke="#fff" strokeWidth="2" /></S></WinBtn>
        </WinBtns>
      </TitleBar>
      <TabBar>
        {TABS.map(([t, w, on]) => <Tab key={t} $w={w} $active={on}>{t}</Tab>)}
        <Tab $w={60} $ctx $ml={6}>格式</Tab>
        <TellMe>
          <S w={10} h={15}><path d="M3 10.500C0 7 .5 1 5 1s5 6 2 9.500zM3.500 12.500h3M4 14.500h2" stroke="#b9c9df" /></S>
          告诉我您想要做什么...
        </TellMe>
        <Login>登录</Login>
        <Share>
          <S w={17} h={20}><circle cx="7" cy="6" r="4.500" stroke="#fff" /><path d="M1 18q0-5 4-7M9 11q2 .5 3 2M12 14v6M9 17h6" stroke="#fff" /></S>
          共享
        </Share>
      </TabBar>

      <Ribbon>
        <Group $w={74}>
          <GroupBody $pl={9}>
            <SmallCol>
              <Small icon={<CoverIcon />} caret>封面</Small>
              <Small icon={<BlankIcon />} off>空白页</Small>
              <Small icon={<BreakIcon />} off>分页</Small>
            </SmallCol>
          </GroupBody>
          <GroupLabel>页面</GroupLabel>
        </Group>
        <Group $w={51}>
          <GroupBody><Large w={50} icon={<TableIcon />} caret>表格</Large></GroupBody>
          <GroupLabel>表格</GroupLabel>
        </Group>
        <Group $w={232}>
          <GroupBody>
            <Large w={50} icon={<PictureIcon />}>图片</Large>
            <Large w={44} icon={<PictureIcon online />}>联机图片</Large>
            <Large w={50} icon={<ShapeIcon />} caret>形状</Large>
            <SmallCol>
              <Small w={19} icon={<SmartArtIcon />}>SmartArt</Small>
              <Small w={19} icon={<ChartIcon />}>图表</Small>
              <Small w={19} icon={<ScreenshotIcon />} caret>屏幕截图</Small>
            </SmallCol>
          </GroupBody>
          <GroupLabel>插图</GroupLabel>
        </Group>
        <Group $w={177}>
          <GroupBody $pl={4}>
            <Large w={42} icon={<LogicIcon />}>逻辑<br />图表</Large>
            <Large w={42} icon={<DataIcon />}>数据<br />图表</Large>
            <Large w={42} icon={<ImageIcon />}>图片</Large>
            <Large w={42} icon={<MarkIcon />}>图标</Large>
          </GroupBody>
          <GroupLabel>素材</GroupLabel>
        </Group>
        <Group $w={173}>
          <GroupBody $pl={7}>
            <SmallCol $w={98}>
              <SmallRow $h={5} />
              <Small h={30} w={19} icon={<StoreIcon />}>应用商店</Small>
              <Small h={30} w={19} icon={<AddinIcon />} caret ml={9}>我的加载项</Small>
            </SmallCol>
            <Large w={64} icon="W"><WikiText>Wikipedia</WikiText></Large>
          </GroupBody>
          <GroupLabel>加载项</GroupLabel>
        </Group>
        <Group $w={62}>
          <GroupBody><Large w={62} icon={<VideoIcon />}>联机视频</Large></GroupBody>
          <GroupLabel>媒体</GroupLabel>
        </Group>
        <Group $w={86}>
          <GroupBody $pl={8}>
            <SmallCol>
              <Small w={19} icon={<LinkIcon />}>超链接</Small>
              <Small w={19} icon={<BookmarkIcon />}>书签</Small>
              <Small w={19} icon={<CrossIcon />}>交叉引用</Small>
            </SmallCol>
          </GroupBody>
          <GroupLabel>链接</GroupLabel>
        </Group>
        <Group $w={52}>
          <GroupBody><Large w={52} off icon={<CommentIcon />}>批注</Large></GroupBody>
          <GroupLabel>批注</GroupLabel>
        </Group>
        <Group $w={71}>
          <GroupBody $pl={9}>
            <SmallCol>
              <Small icon={<HeadFootIcon part="head" />} caret>页眉</Small>
              <Small icon={<HeadFootIcon part="foot" />} caret>页脚</Small>
              <Small icon={<HeadFootIcon part="num" />} caret>页码</Small>
            </SmallCol>
          </GroupBody>
          <GroupLabel>页眉和页脚</GroupLabel>
        </Group>
        <Group $w={225}>
          <GroupBody>
            <Large w={50} icon={<TextBoxIcon />} caret>文本框</Large>
            <SmallCol $w={85}>
              <Small w={18} icon={<PartsIcon />} caret>文档部件</Small>
              <Small w={18} icon={<WordArtIcon />} caret>艺术字</Small>
              <Small w={18} icon={<DropCapIcon />} caret off>首字下沉</Small>
            </SmallCol>
            <SmallCol>
              <Small w={18} icon={<SignIcon />} caret ml={11}>签名行</Small>
              <Small w={18} icon={<DateIcon />} off>日期和时间</Small>
              <Small w={18} icon={<ObjectIcon />} caret ml={11}>对象</Small>
            </SmallCol>
          </GroupBody>
          <GroupLabel>文本</GroupLabel>
        </Group>
        <Group $w={75}>
          <GroupBody $pl={9}>
            <SmallCol>
              <Small w={18} icon={<Glyph>π</Glyph>} caret ml={9} off>公式</Small>
              <Small w={18} icon={<Glyph>Ω</Glyph>} caret off>符号</Small>
              <Small w={18} icon={<NumberIcon />} off>编号</Small>
            </SmallCol>
          </GroupBody>
          <GroupLabel>符号</GroupLabel>
        </Group>
        <Collapse>
          <S w={9} h={6}><path d="M.5 5.500L4.500 1.500l4 4" stroke="#666" strokeWidth="1.500" /></S>
        </Collapse>
      </Ribbon>

      <Qat>
        <QBtn $w={50}><SaveIcon /></QBtn>
        <QBtn><UndoIcon /><QCaret $ml={0} /></QBtn>
        <QBtn><RedoIcon /></QBtn>
        <QBtn><BooksIcon /></QBtn>
        <QBtn><LinkIcon w={16} h={17} /></QBtn>
        <QBtn><DocSearchIcon /></QBtn>
        <QBtn><ClipIcon /></QBtn>
        <QBtn><ReplyIcon /></QBtn>
        <QBtn><S w={7} h={7}><path d="M0 1h7M1 3h5l-2.500 3z" stroke="#d4d4d4" /></S></QBtn>
      </Qat>

      <Workspace>
        <Gutter>
          <Corner>
            <CornerFace>
              <S w={8} h={8}><path d="M1 0v7h7" stroke="#555" strokeWidth="2" /></S>
            </CornerFace>
          </Corner>
          <VRuler>
            {VNUMS.map((n, i) => <VCell key={i}><VNum>{n}</VNum></VCell>)}
          </VRuler>
        </Gutter>

        <DocCol>
          <HRuler>
            <HScale>
              {HNUMS.map((n, i) => <HCell key={i}>{n}</HCell>)}
            </HScale>
            <RulerMark $x={142} $y={-3} width="12" height="28" viewBox="0 0 12 28" fill="none">
              <path d="M.5.5h10v4l-5 5-5-5z" fill="#fff" stroke="#8a8a8a" />
              <path d="M5.500 12l5 5v4H.5v-4z" fill="#fff" stroke="#8a8a8a" />
              <rect x=".5" y="21" width="10" height="6" fill="#fff" stroke="#8a8a8a" />
            </RulerMark>
            <RulerMark $x={562} $y={9} width="12" height="10" viewBox="0 0 12 10" fill="none">
              <path d="M5.500.5l5 5v3.500H.5V5.500z" fill="#fff" stroke="#8a8a8a" />
            </RulerMark>
          </HRuler>
          <Page>
            <CropRow>
              <Crop $side="right" />
              <Crop $side="left" />
            </CropRow>
            <Heading>1.2 XXX</Heading>
            <Para>
              <Line $x={29} $w={461}>使用在需要位置出现的新按钮在 <Red>Word</Red> 中保存时间。若要更改图片适应文</Line>
              <Line $w={482}>档的方式，请单击该图片，图片旁边将会显示布局选项按钮。当处理表格时，</Line>
              <Line $w={266}>单击要添加行或列的位置，然后单击加号。</Line>
              <Line $x={29} $w={444}>在新的阅读视图中阅读更加容易。可以折叠文档某些部分并关注所需文</Line>
              <Line $w={487}>本。如果在达到结尾处之前需要停止读取，<Red>Word</Red> 会记住您的停止位置 - 即使</Line>
              <FreeLine>在另一个设备上。<Red $ml={3}>Apple Watch</Red><Red $ml={15}>App Store</Red><Red $ml={17}>Apple Pay</Red><Red $ml={15}>example</Red></FreeLine>
            </Para>
            <ShapeBox>
              {BOX_LINES.map(([w, text], i) => (
                <Line key={i} $w={w}>{text}</Line>
              ))}
              <RotStem />
              <RotHandle width="30" height="24" viewBox="0 0 30 24" fill="none">
                <circle cx="12" cy="14" r="7" stroke="#a0a0a0" strokeWidth="3" />
                <path d="M20 13h9l-4.500 5z" fill="#a0a0a0" />
              </RotHandle>
              {HANDLES.map(([h, v]) => <Handle key={`${h}-${v}`} $h={h} $v={v} />)}
              <LayoutBtn><LayoutIcon /></LayoutBtn>
            </ShapeBox>
          </Page>
        </DocCol>

        <Pane>
          <PaneHead>
            <PaneTitle>设置形状格式</PaneTitle>
            <PaneTools>
              <S w={9} h={5}><path d="M0 0h9L4.500 5z" fill="#777" /></S>
              <S w={10} h={10}><path d="M.5.5l9 9M9.500.5l-9 9" stroke="#666" strokeWidth="1.800" /></S>
            </PaneTools>
          </PaneHead>
          <SubTabs>
            <SubTab $w={67}>形状选项</SubTab>
            <SubTab $on $w={60}>文本选项</SubTab>
          </SubTabs>
          <PaneIcons>
            <AIcon />
            <AOutlineIcon />
            <ABoxIcon />
          </PaneIcons>
          <PaneRule />
          <SectionHead>
            <S w={6} h={6}><path d="M6 0v6H0z" fill="#555" /></S>
            文本框
          </SectionHead>
          <FieldRow $mt={6} $h={23}>
            <span>垂直对齐方式(<Under>V</Under>)</span>
            <Select>顶端对齐<Arrow /></Select>
          </FieldRow>
          <FieldRow $mt={6} $h={23}>
            <span>文字方向(<Under>X</Under>)</span>
            <Select>横排<Arrow /></Select>
          </FieldRow>
          <CheckRow $mt={8}><Check /><span>不旋转文本(<Under>D</Under>)</span></CheckRow>
          <CheckRow $mt={9}><Check $on><SmallCheck /></Check><span>根据文字调整形状大小(<Under>F</Under>)</span></CheckRow>
          {[["左边距", "L"], ["右边距", "R"], ["上边距", "T"], ["下边距", "B"]].map(([label, key]) => (
            <FieldRow key={key} $mt={7} $h={25}>
              <span>{label}(<Under>{key}</Under>)</span>
              <Spin>1 厘米<SpinArrows><Arrow $up /><Arrow /></SpinArrows></Spin>
            </FieldRow>
          ))}
          <CheckRow $mt={8}><Check $on><SmallCheck /></Check><span>形状中的文字自动换行(<Under>W</Under>)</span></CheckRow>
          <Cursor width="14" height="21" viewBox="0 0 14 21" fill="none">
            <path d="M1 1v15l4-3.500 2.500 6 2.500-1-2.500-6H12z" fill="#fff" stroke="#222" />
          </Cursor>
        </Pane>
      </Workspace>

      <Status>
        <StatusItem $w={116}>第 7 页，共 10 页</StatusItem>
        <StatusItem $w={101}>394/2538 个字</StatusItem>
        <StatusItem $w={74}>修订: 关闭</StatusItem>
        <StatusItem $w={42}>插入</StatusItem>
        <MacroSlot><MacroIcon /></MacroSlot>
        <StatusRight>
          <ViewBtn><ReadIcon /></ViewBtn>
          <ViewBtn $on><PrintIcon /></ViewBtn>
          <ViewBtn><WebIcon /></ViewBtn>
          <ZoomSign $ml={5}>-</ZoomSign>
          <ZoomTrack />
          <ZoomSign>+</ZoomSign>
          <ZoomValue>90%</ZoomValue>
        </StatusRight>
      </Status>
      <BottomEdge />

      <Annotations width="1325" height="1041" viewBox="0 0 1325 1041">
        <polygon points="1057,514 1034.300,518 1037.500,523 987.500,550 988.500,551.500 1039.500,527 1040.700,530.400" fill="#e11b1b" />
        <polygon points="772,717 793.600,725.100 789.500,729 850.800,777.500 849.800,779 787,732.500 785,736.100" fill="#e11b1b" />
      </Annotations>
      <Watermark>
        <svg width="44" height="46" viewBox="0 0 44 46" fill="none">
          <path d="M42 2C22 4 6 10 2 22c-2 7 4 11 12 11-6-2-9-6-6-11C12 13 26 6 42 2z" fill="#5a9bd8" />
          <path d="M34 13c-10-2-20 2-20 9 0 4 6 5 10 3-3 0-5-1-5-3 0-5 7-8 15-9z" fill="#4e8cc9" />
          <path d="M38 16c2 8-3 18-14 22-6 2-11 3-16 7 10-1 28-6 32-18 1-4 0-8-2-11z" fill="#6cc35a" />
          <path d="M8 45c8-6 20-4 26-12-6 3-14 3-20 6-3 2-5 4-6 6z" fill="#e6dc4e" />
        </svg>
        <MarkText>
          <MarkName>极光下载站</MarkName>
          <MarkUrl>www.xz7.com</MarkUrl>
        </MarkText>
      </Watermark>
    </Window>
  );
}
